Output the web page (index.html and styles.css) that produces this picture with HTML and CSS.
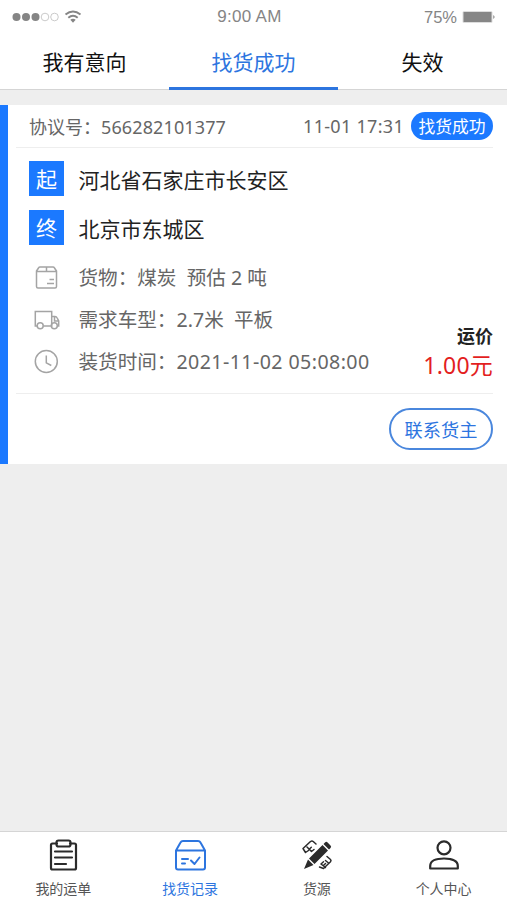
FILE: index.html
```html
<!DOCTYPE html>
<html lang="zh-CN">
<head>
<meta charset="utf-8">
<title>找货记录</title>
<link rel="stylesheet" href="styles.css">
</head>
<body>
<div class="app">
  <header class="status">
    <div class="signal">
      <svg width="72" height="18" viewBox="0 0 72 18">
        <g fill="#858585"><circle cx="4.500" cy="9" r="4"/><circle cx="14" cy="9" r="4"/><circle cx="23.500" cy="9" r="4"/></g>
        <g fill="none" stroke="#bdbdbd" stroke-width=".8"><circle cx="33" cy="9" r="3.800"/><circle cx="42.500" cy="9" r="3.800"/></g>
        <g fill="none" stroke="#858585" stroke-width="1.900"><path d="M53.500 6.500Q61 .5 68.500 6.500"/><path d="M56.300 9.800Q61 5.800 65.700 9.800"/></g>
        <path fill="#858585" d="M58.300 11.700q2.700-2 5.400 0L61 14.700z"/>
      </svg>
    </div>
    <div class="clock">9:00 AM</div>
    <div class="power"><span>75%</span>
      <svg width="34" height="14" viewBox="0 0 34 14"><rect x=".5" y="1" width="30" height="12" rx="1.500" fill="#ddd"/><rect x="1.500" y="2" width="28" height="10" fill="#868686"/><path d="M31.300 5q2.500 2 0 4z" fill="#868686"/></svg>
    </div>
  </header>
  <nav class="tabs">
    <div class="tab">我有意向</div>
    <div class="tab active">找货成功</div>
    <div class="tab">失效</div>
  </nav>
  <main class="content">
    <article class="card">
      <div class="card-head">
        <span>协议号：<span class="number">566282101377</span></span>
        <span class="stamp">11-01 17:31</span>
        <span class="badge">找货成功</span>
      </div>
      <div class="card-body">
        <div class="place"><span class="mark">起</span><span>河北省石家庄市长安区</span></div>
        <div class="place"><span class="mark">终</span><span>北京市东城区</span></div>
        <div class="details">
          <div class="facts">
            <div class="fact">
              <svg viewBox="0 0 26 26"><path d="M2.500 6 4.500 3q.5-1 1.500-1h13q1 0 1.500 1l2 3v15.500q0 1.500-1.500 1.500H4q-1.500 0-1.500-1.500zM2.500 6.500h20M12.500 2v4.500M15.500 14.500h4.500M13 18.500h7"/></svg>
              <span>货物：煤炭&nbsp; 预估 2 吨</span>
            </div>
            <div class="fact">
              <svg viewBox="0 0 26 26"><path d="M3 19H1.300V4.500h16.400V19H9.300M17.700 9.500h3.300q1.500 0 2.200 1.500l1.500 3v5h-1.300M20.500 10v4h4"/><circle cx="6.200" cy="18.800" r="3"/><circle cx="20.300" cy="18.800" r="3"/></svg>
              <span>需求车型：2.7米&nbsp; 平板</span>
            </div>
            <div class="fact">
              <svg viewBox="0 0 26 26"><circle cx="12.300" cy="12.500" r="11"/><path d="M12.300 6.500v7.300l5 2.700"/></svg>
              <span>装货时间：<span class="date">2021-11-02 05:08:00</span></span>
            </div>
          </div>
          <div class="price"><b>运价</b><span>1.00元</span></div>
        </div>
      </div>
      <div class="card-foot"><button class="contact" type="button">联系货主</button></div>
    </article>
  </main>
  <footer class="bottom">
    <div class="item">
      <svg viewBox="0 0 34 34"><path d="M11 5.500H6.500Q5 5.500 5 7v23Q5 31.500 6.500 31.500h22q1.500 0 1.500-1.500V7q0-1.500-1.500-1.500H24"/><rect x="10.500" y="2.500" width="14" height="6" rx="2"/><path d="M9 13.500h17M9 19.500h17M9 26H20"/></svg>
      <span>我的运单</span>
    </div>
    <div class="item active">
      <svg viewBox="0 0 34 34"><path d="M3 12.500 7.500 4.500Q8.300 3 10 3h15q1.700 0 2.500 1.500l4.500 8v17q0 2-2 2H5q-2 0-2-2zM3 12.500h29M9 21H15M9 25.500H12M18 22.500l3.500 3.500 5-6.500"/></svg>
      <span>找货记录</span>
    </div>
    <div class="item">
      <svg viewBox="0 0 34 34"><g fill="#2b2b2b" stroke="none"><path d="M9 20.500 22.500 7l5.500 5.500L14.500 26zM23.500 6l1.500-1.500q1.300-1.300 2.600 0L30.500 7.400q1.300 1.300 0 2.600L29 11.500zM8 21.500l5.500 5.500L4 31z"/></g><g class="ruler"><path d="M5.500 14.500 3 10.500 10.500 3.500q1.500-1 2.700 0L16 6M5.500 14.500 8.500 12.500M7 9l4.500 4.500L14 11.500M9 11.500l2.300-2.200"/><path d="M27 18.500l3.500 3q1 1 0 2.200L23.500 30.500 19.500 29M21 26l4.500 3.500M21 26l2.500-2.200M23.500 27.500l2-2M28.500 25l-3-2.500"/></g></svg>
      <span>货源</span>
    </div>
    <div class="item">
      <svg viewBox="0 0 34 34"><circle cx="17" cy="9.800" r="6.500"/><path d="M3.200 30.500v-2.500C3.200 22.500 9 20.500 17 20.500S30.800 22.500 30.800 28v2.500z"/></svg>
      <span>个人中心</span>
    </div>
  </footer>
</div>
</body>
</html>
```
FILE: styles.css
```css
* { box-sizing: border-box; }
body { margin: 0; font-family: "Noto Sans", "Noto Sans CJK SC", sans-serif; color: #222; }
.app { height: 900px; display: flex; flex-direction: column; background: #fff; white-space: nowrap; }
.status { height: 34px; flex: none; display: grid; grid-template-columns: 1fr auto 1fr; align-items: center; padding: 0 11px 0 12px; color: #858585; font: 16px/34px "Liberation Sans", sans-serif; }
.status svg { display: block; }
.clock { font-size: 17px; letter-spacing: .3px; padding-right: 9px; }
.power { display: flex; justify-content: flex-end; align-items: center; gap: 5px; }
.power span { font-size: 16.5px; }

.tabs { height: 56px; flex: none; display: grid; grid-template-columns: repeat(3, 1fr); border-bottom: 1px solid #d5d5d5; }
.tab { height: 56px; font-size: 21px; line-height: 57px; text-align: center; color: #111; }
.tab.active { color: #2d75df; border-bottom: 3px solid #2d75df; }

.content { flex: 1; padding-top: 15px; background: #eee; }
.card { height: 359px; background: #fff; border-left: 8px solid #1b79ff; padding: 0 14px 0 8px; }
.card-head { height: 43px; display: flex; align-items: center; padding-left: 13px; border-bottom: 1px solid #eee; font-size: 18px; color: #666; }
.number { letter-spacing: .12px; }
.stamp { margin-left: auto; margin-right: 7px; letter-spacing: .3px; }
.badge { width: 82px; height: 28px; border-radius: 14px; background: #1b79ff; color: #fff; font-size: 16.8px; line-height: 30px; text-align: center; }
.card-body { height: 246px; padding: 13px 0 0 13px; border-bottom: 1px solid #eee; }
.place { height: 35px; margin-bottom: 15px; display: flex; align-items: center; gap: 14.5px; font-size: 21px; }
.mark { width: 35px; height: 35px; background: #1b79ff; color: #fff; line-height: 36px; text-align: center; }
.place + .place { margin-top: -1px; margin-bottom: 12px; }
.details { display: flex; justify-content: space-between; align-items: flex-end; }
.fact { height: 42px; display: flex; align-items: center; gap: 18.5px; padding-left: 5px; font-size: 19.6px; line-height: 44px; color: #666; }
.date { letter-spacing: .42px; }
.fact svg { width: 26px; height: 26px; fill: none; stroke: #a4a4a4; stroke-width: 1.5; }
.price { display: flex; flex-direction: column; align-items: flex-end; padding-bottom: 3px; }
.price b { font-size: 18px; line-height: 28px; }
.price span { font-size: 23px; line-height: 30px; letter-spacing: .2px; color: #e31e1e; }
.card-foot { display: flex; justify-content: flex-end; padding-top: 14px; }
.contact { width: 104px; height: 42px; padding: 0; border: 2px solid #4a87dd; border-radius: 21px; background: #fff; color: #2d75df; font: 18.2px/38px "Noto Sans CJK SC", sans-serif; }

.bottom { height: 69px; flex: none; display: grid; grid-template-columns: repeat(4, 1fr); border-top: 1px solid #d5d5d5; }
.item { display: flex; flex-direction: column; align-items: center; padding-top: 6px; font-size: 14px; line-height: 20px; color: #555; }
.item svg { width: 34px; height: 34px; margin-bottom: 7px; fill: none; stroke: #2b2b2b; stroke-width: 2.2; stroke-linecap: round; stroke-linejoin: round; }
.item .ruler { stroke-width: 1.5; }
.item.active { color: #2d75df; }
.item.active svg { stroke: #2d75df; stroke-width: 2; }
```
